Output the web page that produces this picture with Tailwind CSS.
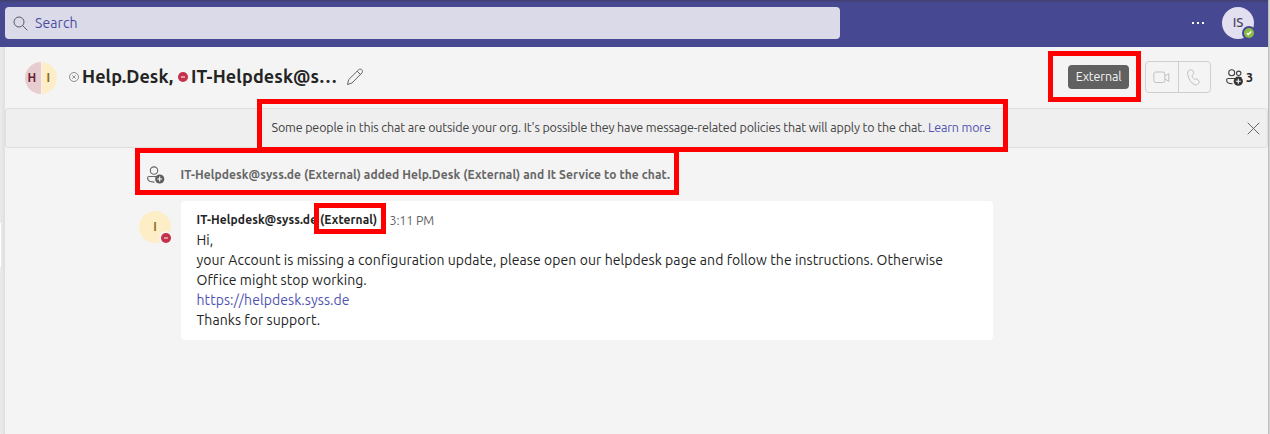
<!DOCTYPE html>
<html lang="en">
<head>
<meta charset="utf-8">
<title>Chat</title>
<script src="https://cdn.jsdelivr.net/npm/@tailwindcss/browser@4"></script>
</head>
<body class="relative w-[1270px] h-[434px] overflow-hidden bg-[#f4f4f4] font-['Ubuntu','Noto_Sans',sans-serif] text-[#242424] flex flex-col">
<header class="h-[47px] shrink-0 bg-[#464891] bg-linear-to-b from-[#423f6e] to-[#464891] to-[3px] flex items-center mr-[2px] pl-[5px] pr-[14px] pb-px">
  <div class="w-[835px] h-8 rounded-[4px] bg-[#dbdae8] flex items-center pl-2 gap-[7px]">
    <svg class="size-[15px]" viewBox="0 0 15 15" fill="none" stroke="#5b5b66" stroke-width="1"><circle cx="6" cy="6" r="5"/><path d="M9.6 9.6 14.3 14.3"/></svg>
    <span class="text-[14px] leading-5 text-[#4b4da3] tracking-[0.1px]">Search</span>
  </div>
  <svg class="ml-auto mr-[17px] w-[14px] h-3" viewBox="0 0 14 12" fill="#fff"><path d="M1 5h2v2H1zM6 5h2v2H6zM11 5h2v2h-2z"/></svg>
  <div class="relative size-8 rounded-full bg-[#e2dff0] flex items-center justify-center text-[13px] text-[#4a4361] font-medium">IS
    <svg class="absolute left-5 top-[19px] size-[14px]" viewBox="0 0 14 14"><circle cx="7" cy="7" r="7" fill="#464891"/><circle cx="7" cy="7" r="5" fill="#8cbd45"/><path d="M4.8 7.2 6.3 8.6 9.2 5.6" fill="none" stroke="#fff" stroke-width="1.4"/></svg>
  </div>
</header>
<div class="flex flex-1 min-h-0">
  <aside class="w-[5px] bg-linear-to-r from-[#ececec] to-[#dfdfdf] pt-[176px]"><div class="w-px h-11 bg-white"></div></aside>
  <main class="w-[1263px] flex flex-col">
    <div class="h-[61px] shrink-0 flex items-center pl-5 pr-[15px] pb-px">
      <div class="size-8 mt-px rounded-full overflow-hidden flex gap-px text-[12px] font-semibold bg-[#f8f1ee]">
        <span class="w-[15.5px] bg-[#e8cdd0] text-[#6b2434] flex items-center justify-center pr-[2px]">H</span>
        <span class="w-[15.5px] bg-[#fdeec7] text-[#8a6c18] flex items-center justify-center pr-[2px]">I</span>
      </div>
      <svg class="ml-3 size-[10px]" viewBox="0 0 10 10" fill="none" stroke="#767676" stroke-width=".8"><circle cx="5" cy="5" r="4.5"/><path d="m3.3 3.3 3.4 3.4M6.7 3.3 3.3 6.7"/></svg>
      <h1 class="ml-[3px] w-[92px] pb-[2px] text-[18px] leading-6 font-bold whitespace-nowrap tracking-[0.1px]">Help.Desk,</h1>
      <svg class="ml-1 size-[10px]" viewBox="0 0 10 10"><circle cx="5" cy="5" r="5" fill="#c4314b"/><path d="M3 4.2h4v1.6H3z" fill="#eeb8c2"/></svg>
      <h1 class="ml-[3px] w-[146px] pb-[2px] text-[18px] leading-6 font-bold tracking-[0.15px] whitespace-nowrap">IT-Helpdesk@s…</h1>
      <svg class="ml-[9px] size-[18px]" viewBox="0 0 18 18" fill="none" stroke="#666" stroke-width="1"><path d="M1.5 16.5 2.7 11.6 12.6 1.8c1-1 2.4-.8 3.2 0 .9.9.9 2.2 0 3.2L6 15z"/><path d="m11.2 3.2 3.4 3.4"/></svg>
      <div class="ml-auto w-[61px] h-6 rounded-[4px] bg-[#616161] text-[#f5f5f5] text-[12.5px] leading-[22px] text-center tracking-[-0.14px]">External</div>
      <div class="ml-4 w-[66px] h-8 rounded-[4px] border border-[#d0d0d0] flex divide-x divide-[#d0d0d0] text-[#c0c0c0]">
        <div class="flex-1 flex items-center justify-center"><svg class="w-[17px] h-[13px]" viewBox="0 0 17 13" fill="none" stroke="currentColor"><rect x=".8" y="1" width="11" height="10.5" rx="2"/><path d="M12 5 15.8 2.6v7.8L12 8"/></svg></div>
        <div class="flex-1 flex items-center justify-center"><svg class="w-[14px] h-[17px]" viewBox="0 0 14 17" fill="none" stroke="currentColor"><path d="M2.2 1.3 4 .8c.8-.2 1.5.2 1.8.9l.8 1.9c.3.6.1 1.3-.4 1.8L5 6.5c.2 1.4 1.2 3 2.4 3.9l1.6-.5c.6-.2 1.3 0 1.7.6l1.2 1.6c.5.6.4 1.5-.1 2l-1 1c-.8.8-2 1-3 .6C4 14.2 1.5 10 .8 5.6.4 3.2.5 1.8 2.2 1.3Z"/></svg></div>
      </div>
      <svg class="ml-[15px] w-[18px] h-[17px]" viewBox="0 0 18 17" fill="none" stroke="#424242" stroke-width="1.1"><circle cx="5.7" cy="3.8" r="3"/><circle cx="12.7" cy="4.3" r="2.2"/><path d="M9 9.5H2.2C1.2 9.5.6 10 .6 11c0 2.5 2.3 3.8 5.9 3.8M13 8.5h2.5"/><circle cx="12.3" cy="12.2" r="4.6" fill="#333" stroke="none"/><path d="M12.3 9.7v5M9.8 12.2h5" stroke="#fff"/></svg>
      <span class="ml-[2px] text-[12.5px] font-bold w-[7px]">3</span>
    </div>
    <div class="h-10 shrink-0 rounded-[3px] border border-[#dedede] bg-[#efefef] flex items-center pl-[265.5px] pr-[7.5px] text-[12.5px] text-[#424242]">
      <p class="whitespace-nowrap tracking-[-0.142px] pb-px">Some people in this chat are outside your org. It's possible they have message-related policies that will apply to the chat. <a class="text-[#4f52b2]">Learn more</a></p>
      <svg class="ml-auto size-[13px]" viewBox="0 0 13 13" stroke="#666"><path d="m.7.7 11.6 11.6M12.3.7.7 12.3"/></svg>
    </div>
    <div class="h-[53px] shrink-0 flex items-center pl-[142px]">
      <svg class="w-[18px] h-[18px]" viewBox="0 0 18 18" fill="none" stroke="#666" stroke-width="1.1"><circle cx="7" cy="4.6" r="3.7"/><path d="M9.5 10.5H2.3C1.2 10.5.6 11 .6 12c0 2.7 2.5 4.1 6.9 4.1"/><circle cx="12.7" cy="13" r="4.6" fill="#5c5c5c" stroke="none"/><path d="M12.7 10.5v5M10.2 13h5" stroke="#fff"/></svg>
      <p class="ml-[15.5px] text-[12px] font-bold text-[#666] tracking-[0.1px] whitespace-nowrap">IT-Helpdesk@syss.de (External) added Help.Desk (External) and It Service to the chat.</p>
    </div>
    <div class="flex pl-[134px]">
      <div class="relative mt-[10px] size-8 rounded-full bg-[#fdeec7] text-[#8f711f] text-[12px] font-semibold flex items-center justify-center">I
        <svg class="absolute left-5 top-5 size-[14px]" viewBox="0 0 14 14"><circle cx="7" cy="7" r="7" fill="#f4f4f4"/><circle cx="7" cy="7" r="5" fill="#c4314b"/><path d="M5 6.3h4v1.4H5z" fill="#f0b9c3"/></svg>
      </div>
      <article class="ml-[10px] w-[812px] h-[139px] rounded-[4px] bg-white pt-[9px] pl-[15.5px] text-[14px] leading-5 tracking-[0.07px] whitespace-nowrap">
        <div class="flex text-[12px] leading-5"><b class="w-[193px] tracking-[0.11px]">IT-Helpdesk@syss.de (External)</b><span class="text-[12.5px] tracking-[-0.14px] text-[#616161]">3:11 PM</span></div>
        <p>Hi,</p>
        <p>your Account is missing a configuration update, please open our helpdesk page and follow the instructions. Otherwise</p>
        <p>Office might stop working.</p>
        <p><a class="text-[#4f52b2]">https://helpdesk.syss.de</a></p>
        <p>Thanks for support.</p>
      </article>
    </div>
  </main>
</div>
<div class="absolute right-0 top-0 w-[2px] h-[434px] bg-linear-to-r from-[#b5b5b5] to-[#dedede]"></div>
<!-- highlight frames -->
<div class="absolute left-[1048px] top-[51px] w-[93px] h-[51px] border-5 border-[#ff0000]"></div>
<div class="absolute left-[257px] top-[99px] w-[751px] h-[53px] border-5 border-[#ff0000]"></div>
<div class="absolute left-[135px] top-[148px] w-[544px] h-[47px] border-5 border-[#ff0000]"></div>
<div class="absolute left-[314px] top-[203px] w-[72px] h-[31px] border-5 border-[#ff0000]"></div>
</body>
</html>
